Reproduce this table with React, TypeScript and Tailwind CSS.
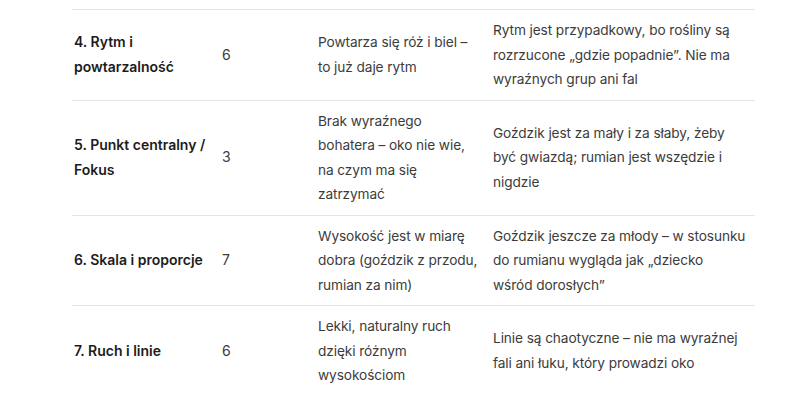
const rows = [
  {
    name: "4. Rytm i powtarzalność",
    score: "6",
    plus: "Powtarza się róż i biel – to już daje rytm",
    minus: "Rytm jest przypadkowy, bo rośliny są rozrzucone „gdzie popadnie”. Nie ma wyraźnych grup ani fal",
  },
  {
    name: "5. Punkt centralny / Fokus",
    score: "3",
    plus: "Brak wyraźnego bohatera – oko nie wie, na czym ma się zatrzymać",
    minus: "Goździk jest za mały i za słaby, żeby być gwiazdą; rumian jest wszędzie i nigdzie",
  },
  {
    name: "6. Skala i proporcje",
    score: "7",
    plus: "Wysokość jest w miarę dobra (goździk z przodu, rumian za nim)",
    // nbsp keeps the last two words together, as in the source
    minus: "Goździk jeszcze za młody – w stosunku do rumianu wygląda jak „dziecko wśród\u00a0dorosłych”",
  },
  {
    name: "7. Ruch i linie",
    score: "6",
    plus: "Lekki, naturalny ruch dzięki różnym wysokościom",
    minus: "Linie są chaotyczne – nie ma wyraźnej fali ani łuku, który prowadzi oko",
  },
];

export default function App() {
  return (
    <div className="w-[800px] h-[404px] overflow-hidden bg-white font-['Inter',sans-serif] text-[14px] leading-[24.5px] text-[#3c3c3c]">
      <div className="ml-[72px] mt-[9px] w-[683px]">
        {rows.map((row) => (
          <div
            key={row.name}
            className="grid grid-cols-[149px_97px_174px_263px] items-center border-t border-[#e6e6e6]"
          >
            <div className="py-2 pl-[2px] pr-[14px] font-semibold text-[#1c1c1c]">{row.name}</div>
            <div className="py-2 pl-[1px]">{row.score}</div>
            <div className="py-2 pr-[12px] text-[13.7px] tracking-[-0.1px]">{row.plus}</div>
            <div className="py-2 pl-[1px] pr-[8px] text-[13.7px] tracking-[-0.1px]">{row.minus}</div>
          </div>
        ))}
      </div>
    </div>
  );
}
